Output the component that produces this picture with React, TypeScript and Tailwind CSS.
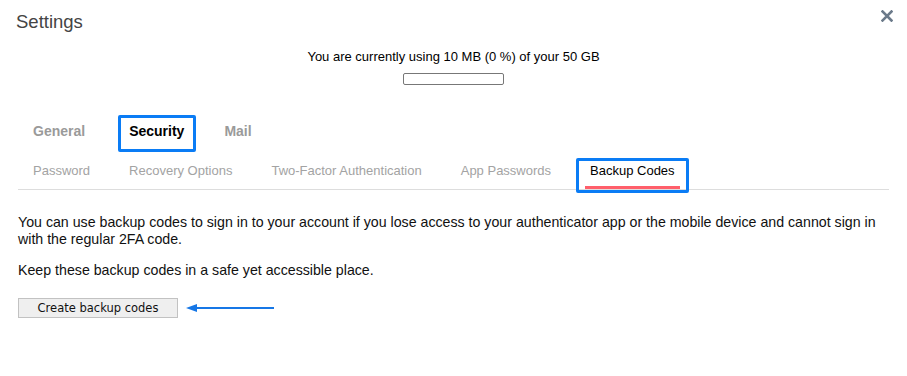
const subTabs = [
  "Password",
  "Recovery Options",
  "Two-Factor Authentication",
  "App Passwords",
  "Backup Codes",
];

const mainTabs = ["General", "Security", "Mail"];

export default function App() {
  return (
    <div
      className="relative w-[907px] h-[376px] bg-white text-[#222]"
      style={{ fontFamily: '"Liberation Sans", Arial, sans-serif' }}
    >
      <div className="px-[16px] pt-[12px]">
        <h1 className="text-[18.5px] leading-[20px] text-[#444]">Settings</h1>
      </div>
      <button className="absolute top-[10px] right-[14px] w-[12px] h-[12px]">
        <svg viewBox="0 0 12 12" className="w-[12px] h-[12px]">
          <path
            d="M1.5 1.5 L10.5 10.5 M10.5 1.5 L1.5 10.5"
            stroke="#6b7a8a"
            strokeWidth="2.6"
            strokeLinecap="square"
          />
        </svg>
      </button>

      <div className="mt-[18px] flex flex-col items-center">
        <p className="text-[13px] leading-[14px] text-black">
          You are currently using 10 MB (0 %) of your 50 GB
        </p>
        <div className="mt-[9px] w-[101px] h-[12px] rounded-[2px] border border-[#777] bg-white" />
      </div>

      <div className="mx-[18px] mt-[30px] flex">
        {mainTabs.map((tab) => (
          <div
            key={tab}
            className={
              "relative h-[32px] px-[15px] flex items-center text-[14px] font-bold " +
              (tab === "Security" ? "ml-[14px] text-black" : "text-[#9a9a9a]") +
              (tab === "Mail" ? " ml-[10px]" : "")
            }
          >
            {tab}
            {tab === "Security" && (
              <div className="absolute left-[4px] right-[3px] top-0 h-[37px] border-[3px] border-[#0a7cf5] rounded-[2px]" />
            )}
          </div>
        ))}
      </div>

      <div className="mx-[18px] mt-[5px] flex gap-[9px] border-b border-[#dddddd]">
        {subTabs.map((tab) => (
          <div
            key={tab}
            className={
              "relative h-[37px] px-[15px] pt-[11px] text-[13px] leading-[15px] " +
              (tab === "Backup Codes" ? "text-black" : "text-[#a3a3a3]")
            }
          >
            {tab}
            {tab === "Backup Codes" && (
              <>
                <div className="absolute left-[10px] right-[10px] bottom-0 h-[3px] bg-[#ff5f6b]" />
                <div className="absolute left-[1px] right-[1px] top-[6px] -bottom-[4px] border-[3px] border-[#0a7cf5] rounded-[2px]" />
              </>
            )}
          </div>
        ))}
      </div>

      <div className="px-[18px] mt-[24px] text-[14.2px] leading-[17px] text-[#111]">
        <p>
          You can use backup codes to sign in to your account if you lose access to your
          authenticator app or the mobile device and cannot sign in with the regular 2FA code.
        </p>
        <p className="mt-[14px]">Keep these backup codes in a safe yet accessible place.</p>
        <div className="mt-[19px] flex items-center">
          <button
            className="w-[160px] h-[20px] border border-[#c2c2c2] bg-[#efefef] text-[11.5px] leading-[18px] text-[#111]"
            style={{ fontFamily: '"DejaVu Sans", Verdana, sans-serif' }}
          >
            Create backup codes
          </button>
          <svg width="90" height="10" viewBox="0 0 90 10" className="ml-[8px]">
            <path d="M8 5 H88" stroke="#1677e6" strokeWidth="2" />
            <path d="M0 5 L11 1 L11 9 Z" fill="#1677e6" />
          </svg>
        </div>
      </div>
    </div>
  );
}
